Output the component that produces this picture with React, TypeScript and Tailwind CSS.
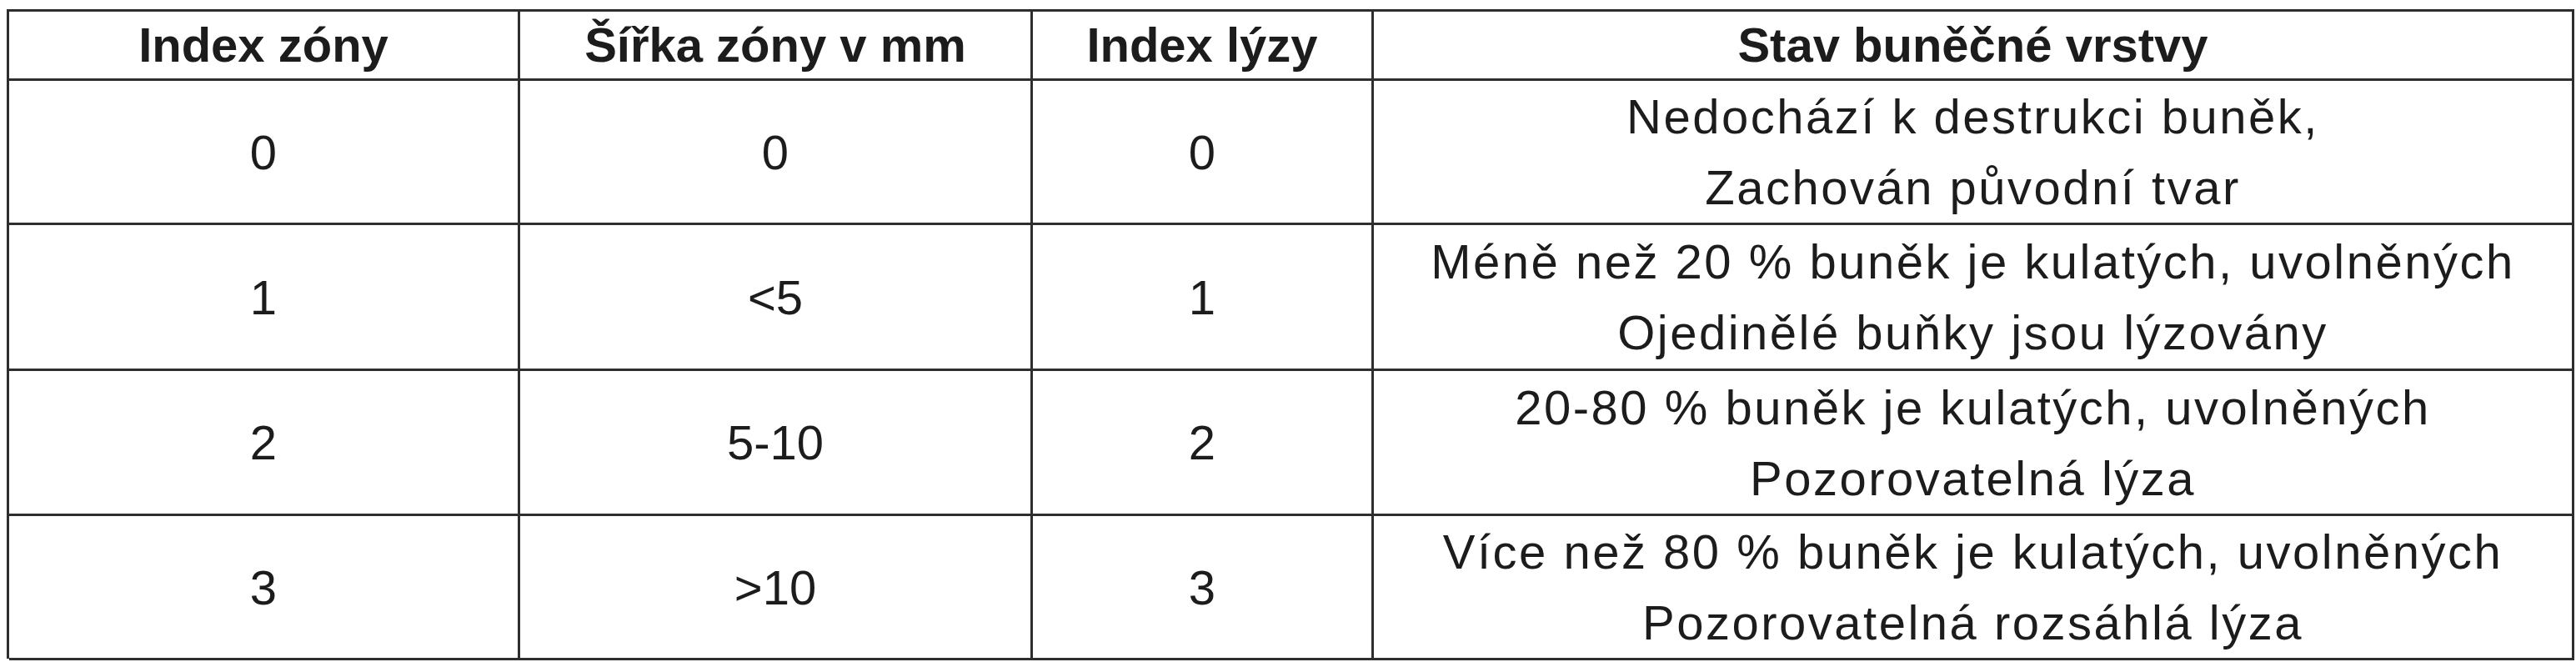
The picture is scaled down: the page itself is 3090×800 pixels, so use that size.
const rows = [
  { zone: '0', width: '0', lysis: '0', state: ['Nedochází k destrukci buněk,', 'Zachován původní tvar'], h: 'h-[173px]' },
  { zone: '1', width: '<5', lysis: '1', state: ['Méně než 20 % buněk je kulatých, uvolněných', 'Ojedinělé buňky jsou lýzovány'], h: 'h-[175px]' },
  { zone: '2', width: '5-10', lysis: '2', state: ['20-80 % buněk je kulatých, uvolněných', 'Pozorovatelná lýza'], h: 'h-[174px]' },
  { zone: '3', width: '>10', lysis: '3', state: ['Více než 80 % buněk je kulatých, uvolněných', 'Pozorovatelná rozsáhlá lýza'], h: 'h-[171px]' },
]

const cols = 'grid grid-cols-[613px_615px_409px_1440px]'
const cell = 'flex flex-col items-center justify-center border-r-[3px] border-b-[3px] border-[#2e2e2e] text-center'

export default function App() {
  return (
    <div className="w-[3090px] h-[800px] bg-white font-['Liberation_Sans',Arial,sans-serif] text-[#1c1c1c]">
      <div className="ml-[8px] pt-[11px]">
        <div className="w-[3080px] border-l-[3px] border-t-[3px] border-[#2e2e2e]">
          {/* header */}
          <div className={`${cols} h-[83px] text-[58px] font-bold leading-none`}>
            <div className={cell}>Index zóny</div>
            <div className={cell}>Šířka zóny v mm</div>
            <div className={cell}>Index lýzy</div>
            <div className={cell}>Stav buněčné vrstvy</div>
          </div>

          {rows.map((r) => (
            <div key={r.zone} className={`${cols} ${r.h} text-[58px]`}>
              <div className={cell}>{r.zone}</div>
              <div className={cell}>{r.width}</div>
              <div className={cell}>{r.lysis}</div>
              <div className={`${cell} leading-[85px] tracking-[2.5px]`}>
                {r.state.map((line) => (
                  <div key={line}>{line}</div>
                ))}
              </div>
            </div>
          ))}
        </div>
      </div>
    </div>
  )
}
